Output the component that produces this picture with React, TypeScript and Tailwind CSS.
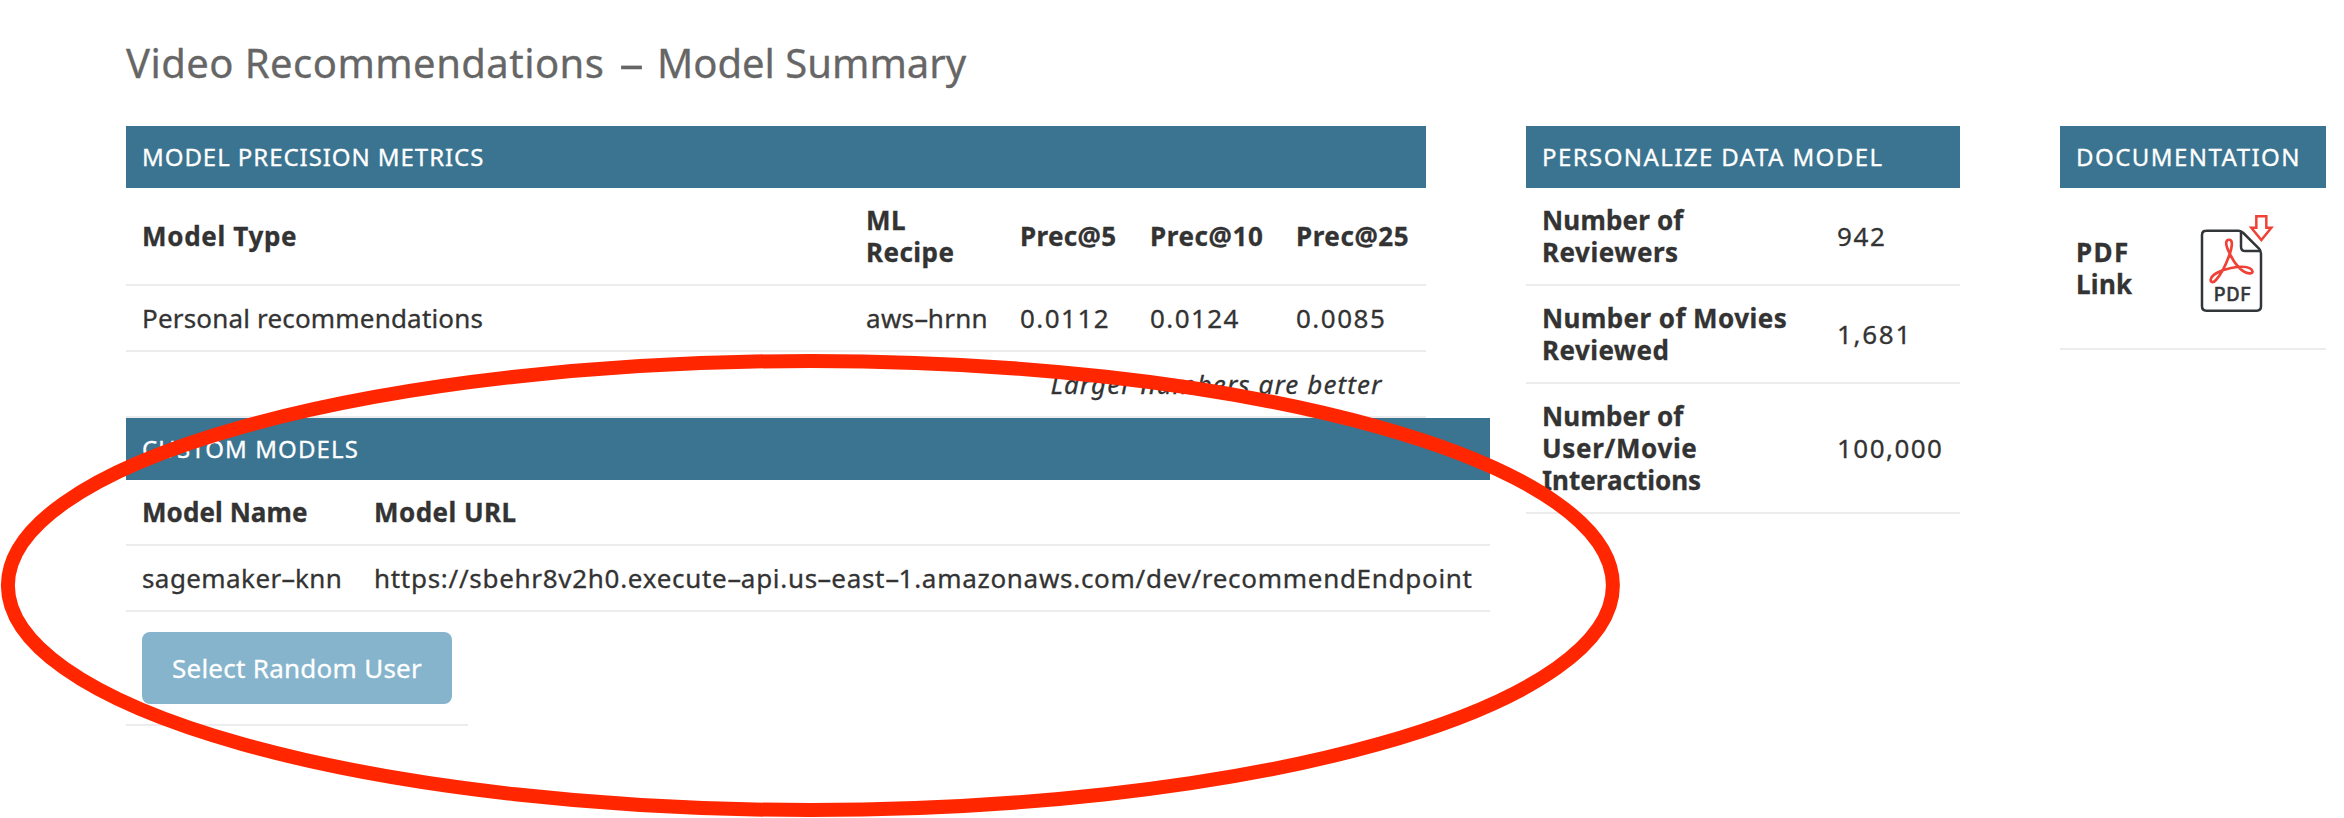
import type { ReactNode } from 'react';

const EDGE = 'border-b-2 border-[#ececec]';

function SectionHeader({ children }: { children: ReactNode }) {
  return (
    <h2 className="flex h-[62px] items-center bg-[#3b7490] px-4 text-[24px] font-normal whitespace-nowrap text-white">
      {children}
    </h2>
  );
}

// Wide hyphen used throughout the body text.
function Hyphen() {
  return <span className="mx-[2.500px] inline-block scale-x-[1.8] tracking-normal">-</span>;
}

function PdfIcon() {
  return (
    <svg className="block h-[99px] w-[74px]" viewBox="60 40 222 297" fill="none" aria-label="Download PDF">
      <path
        d="M78 90.500H176Q183 90.500 190 97L237 144Q243 150 243 159V317Q243 330 230 330H79Q66 330 66 317V103Q66 90.500 79 90.500Z"
        stroke="#333639"
        strokeWidth="7.500"
      />
      <path d="M183 93V138Q183 151 196 151H240" stroke="#333639" strokeWidth="7.500" />
      <path d="M229 47H259V81H274L244 118L214 81H229Z" stroke="#ef4136" strokeWidth="7.500" />
      <path
        d="M149 158C141 143 137 133 139 124C141 115 153 115 155 124C157 135 154 147 147 166C138 191 122 222 108 238C101 246 91 247 92 237C94 222 122 208 153 202C174 198 199 197 210 203C222 210 219 219 208 218C188 217 164 192 149 158Z"
        stroke="#ef4136"
        strokeWidth="8"
        strokeLinejoin="round"
      />
      <text
        x="102"
        y="302"
        fill="#333639"
        stroke="#333639"
        strokeWidth="1.500"
        fontFamily="Inter, Roboto, sans-serif"
        fontSize="54"
        fontWeight="500"
        textLength="111"
      >
        PDF
      </text>
    </svg>
  );
}

function MetricsTable() {
  return (
    <section className="w-[1300px]">
      <SectionHeader>
        <span className="tracking-[0.94px]">MODEL PRECISION METRICS</span>
      </SectionHeader>
      <div className={`grid h-[98px] grid-cols-[724px_154px_130px_146px_146px] items-center font-bold ${EDGE}`}>
        <div className="pl-4 tracking-[0.68px]">Model Type</div>
        <div className="pl-4 tracking-[0.45px]">ML<br />Recipe</div>
        <div className="pl-4 tracking-[0.32px]">Prec@5</div>
        <div className="pl-4 tracking-[0.6px]">Prec@10</div>
        <div className="pl-4 tracking-[0.55px]">Prec@25</div>
      </div>
      <div className={`grid h-[66px] grid-cols-[724px_154px_130px_146px_146px] items-center ${EDGE}`}>
        <div className="pl-4 tracking-[0.18px]">Personal recommendations</div>
        <div className="pl-4 tracking-[0.3px]">aws<Hyphen />hrnn</div>
        <div className="pl-4 tracking-[1.45px]">0.0112</div>
        <div className="pl-4 tracking-[1.4px]">0.0124</div>
        <div className="pl-4 tracking-[1.5px]">0.0085</div>
      </div>
      <div className={`flex h-[66px] items-center justify-end pr-[43.5px] italic tracking-[1.1px] ${EDGE}`}>
        Larger numbers are better
      </div>
    </section>
  );
}

function CustomModels() {
  return (
    <section className="w-[1364px]">
      <SectionHeader>
        <span className="tracking-[1.1px]">CUSTOM MODELS</span>
      </SectionHeader>
      <div className={`grid h-[66px] grid-cols-[232px_1fr] items-center font-bold ${EDGE}`}>
        <div className="pl-4 tracking-[0.07px]">Model Name</div>
        <div className="pl-4 tracking-[0.45px]">Model URL</div>
      </div>
      <div className={`grid h-[66px] grid-cols-[232px_1fr] items-center whitespace-nowrap ${EDGE}`}>
        <div className="pl-4 tracking-[0.42px]">sagemaker<Hyphen />knn</div>
        <div className="pl-4 tracking-[0.71px]">
          https://sbehr8v2h0.execute<Hyphen />api.us<Hyphen />east<Hyphen />1.amazonaws.com/dev/recommendEndpoint
        </div>
      </div>
      <div className={`w-[342px] px-4 pt-5 pb-5 ${EDGE}`}>
        <button className="flex h-[72px] w-[310px] items-center justify-center rounded-lg bg-[#85b4cc] tracking-[0.26px] text-white">
          Select Random User
        </button>
      </div>
    </section>
  );
}

function DataModel() {
  return (
    <section className="w-[434px]">
      <SectionHeader>
        <span className="tracking-[1.42px]">PERSONALIZE DATA MODEL</span>
      </SectionHeader>
      <div className={`grid h-[98px] grid-cols-[294px_1fr] items-center ${EDGE}`}>
        <div className="pl-4 font-bold tracking-[0.17px]">
          Number of<br /><span className="tracking-[0.5px]">Reviewers</span>
        </div>
        <div className="pl-[17px] tracking-[1.6px]">942</div>
      </div>
      <div className={`grid h-[98px] grid-cols-[294px_1fr] items-center ${EDGE}`}>
        <div className="pl-4 font-bold tracking-[0.43px]">Number of Movies<br />Reviewed</div>
        <div className="pl-[17px] tracking-[1.7px]">1,681</div>
      </div>
      <div className={`grid h-[130px] grid-cols-[294px_1fr] items-center ${EDGE}`}>
        <div className="pl-4 font-bold tracking-[0.17px]">
          Number of<br />
          <span className="tracking-[0.65px]">User/Movie</span><br />
          <span className="tracking-[0px]">Interactions</span>
        </div>
        <div className="pl-[17px] tracking-[1.45px]">100,000</div>
      </div>
    </section>
  );
}

function Documentation() {
  return (
    <section className="w-[266px]">
      <SectionHeader>
        <span className="tracking-[1.45px]">DOCUMENTATION</span>
      </SectionHeader>
      <div className={`flex h-[162px] items-center ${EDGE}`}>
        <div className="w-[140px] pl-4 font-bold tracking-[0.3px]">
          <span className="tracking-[1.4px]">PDF</span><br />Link
        </div>
        <div className="-mt-[9px]">
          <PdfIcon />
        </div>
      </div>
    </section>
  );
}

export default function App() {
  return (
    <div className="relative h-[818px] w-[2344px] overflow-hidden bg-white pl-[126px] font-['Noto_Sans',sans-serif] text-[26px] leading-[32px] text-[#333333] [-webkit-text-stroke:0.3px]">
      <h1 className="h-[126px] pt-[47px] text-[40px] whitespace-nowrap text-[#666666]">
        <span className="tracking-[0.45px]">Video Recommendations </span>
        <span className="mr-[8.500px] ml-[10px] inline-block scale-x-[2.1]">-</span>
        <span> Model Summary</span>
      </h1>
      <div className="flex items-start">
        <div className="w-[1400px]">
          <MetricsTable />
          <CustomModels />
        </div>
        <DataModel />
        <div className="ml-[100px]">
          <Documentation />
        </div>
      </div>
      <svg className="pointer-events-none absolute inset-0" width="2344" height="818" viewBox="0 0 2344 818" fill="none">
        <ellipse cx="810.4" cy="585.500" rx="802.500" ry="224.500" stroke="#ff2600" strokeWidth="14" />
      </svg>
    </div>
  );
}
